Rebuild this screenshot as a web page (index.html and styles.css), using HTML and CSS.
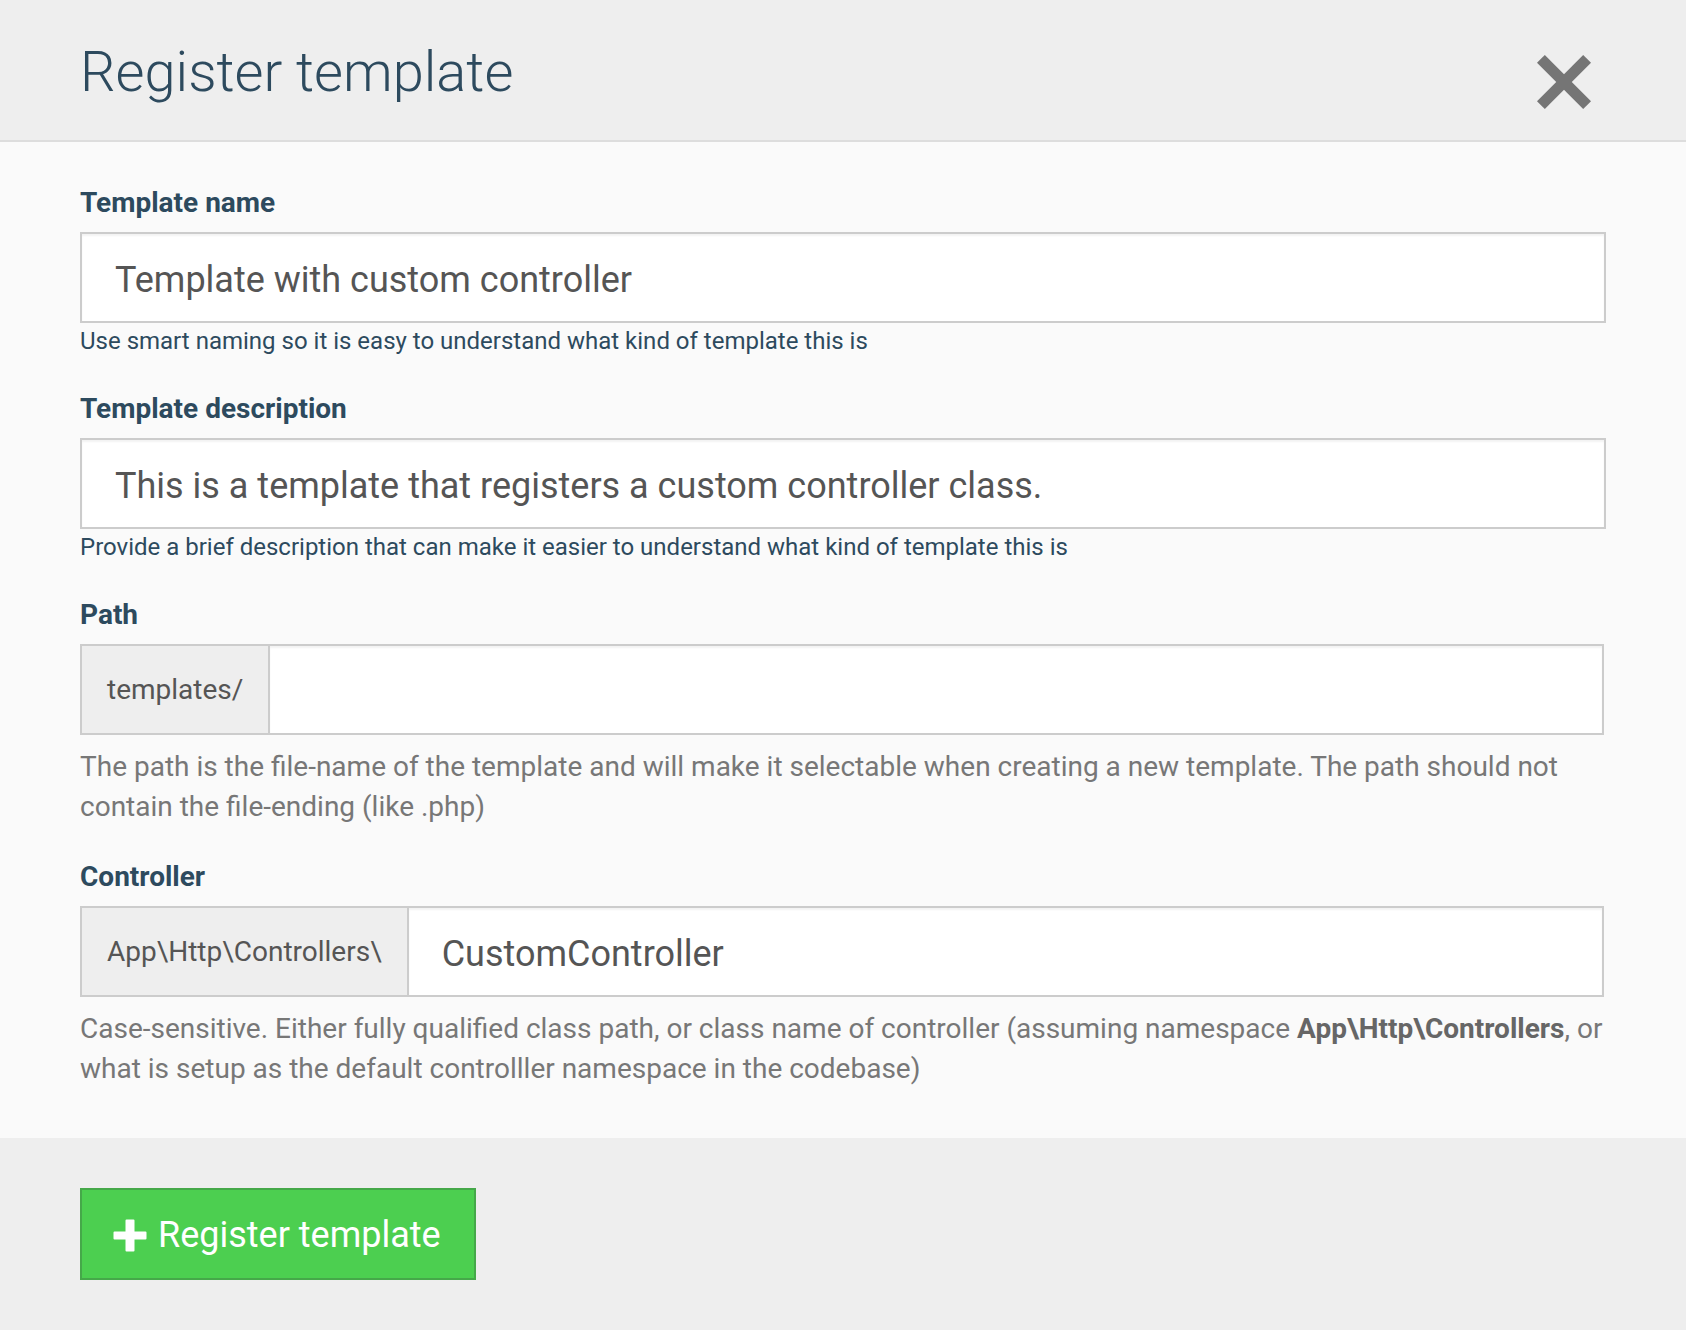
FILE: index.html
```html
<!DOCTYPE html>
<html lang="en">
<head>
<meta charset="utf-8">
<title>Register template</title>
<link rel="stylesheet" href="styles.css">
</head>
<body>
<div class="modal">
  <header class="modal-header">
    <h1 class="modal-title">Register template</h1>
    <button class="close" type="button" aria-label="Close">
      <svg width="54" height="54" viewBox="0 0 54 54" aria-hidden="true">
        <line x1="3.9" y1="3.9" x2="50.1" y2="50.1" stroke="#757575" stroke-width="11"/>
        <line x1="50.1" y1="3.9" x2="3.9" y2="50.1" stroke="#757575" stroke-width="11"/>
      </svg>
    </button>
  </header>
  <main class="modal-body">
    <div class="field">
      <label class="field-label">Template name</label>
      <div class="input">Template with custom controller</div>
      <p class="hint">Use smart naming so it is easy to understand what kind of template this is</p>
    </div>
    <div class="field">
      <label class="field-label">Template description</label>
      <div class="input">This is a template that registers a custom controller class.</div>
      <p class="hint">Provide a brief description that can make it easier to understand what kind of template this is</p>
    </div>
    <div class="field">
      <label class="field-label">Path</label>
      <div class="input-group">
        <span class="addon">templates/</span>
        <div class="input input-grow"></div>
      </div>
      <p class="help">The path is the file-name of the template and will make it selectable when creating a new template. The path should not contain the file-ending (like .php)</p>
    </div>
    <div class="field">
      <label class="field-label">Controller</label>
      <div class="input-group">
        <span class="addon">App\Http\Controllers\</span>
        <div class="input input-grow">CustomController</div>
      </div>
      <p class="help">Case-sensitive. Either fully qualified class path, or class name of controller (assuming namespace <strong>App\Http\Controllers</strong>, or what is setup as the default controlller namespace in the codebase)</p>
    </div>
  </main>
  <footer class="modal-footer">
    <button class="btn-success" type="button">
      <svg class="plus" width="34" height="34" viewBox="0 0 34 34" aria-hidden="true">
        <path d="M13.5 1.5h7a1 1 0 0 1 1 1v11h11a1 1 0 0 1 1 1v6a1 1 0 0 1-1 1h-11v11a1 1 0 0 1-1 1h-7a1 1 0 0 1-1-1v-11h-11a1 1 0 0 1-1-1v-6a1 1 0 0 1 1-1h11v-11a1 1 0 0 1 1-1z" fill="#ffffff"/>
      </svg>
      <span>Register template</span>
    </button>
  </footer>
</div>
</body>
</html>
```
FILE: styles.css
```css
* { box-sizing: border-box; }
html, body { margin: 0; padding: 0; }
body {
  font-family: Roboto, "Liberation Sans", Arial, sans-serif;
  background: #fafafa;
  width: 1686px;
  min-height: 1330px;
}
.modal {
  display: flex;
  flex-direction: column;
  min-height: 1330px;
}
.modal-header {
  height: 142px;
  background: #eeeeee;
  border-bottom: 2px solid #dddddd;
  padding: 0 95px 0 80px;
  display: flex;
  justify-content: space-between;
  align-items: flex-start;
}
.modal-title {
  margin: 39px 0 0 0;
  font-size: 56px;
  line-height: 66px;
  font-weight: 300;
  color: #2d4a5e;
}
.close {
  margin-top: 55px;
  padding: 0;
  border: 0;
  background: transparent;
  width: 54px;
  height: 54px;
  display: block;
}
.close svg { display: block; }
.modal-body {
  padding: 46px 80px 52px 80px;
  display: flex;
  flex-direction: column;
  gap: 38px;
  flex: 0 0 auto;
}
.field { display: flex; flex-direction: column; }
.field-label {
  font-size: 28px;
  line-height: 30px;
  font-weight: 700;
  color: #2d4a5e;
  margin-bottom: 14px;
}
.input {
  height: 91px;
  background: #ffffff;
  border: 2px solid #cccccc;
  box-shadow: inset 0 2px 2px rgba(0,0,0,0.05);
  padding: 5px 33px 0 33px;
  font-size: 36px;
  color: #555555;
  display: flex;
  align-items: center;
}
.input-group {
  display: flex;
  height: 91px;
  margin-right: 2px;
}
.addon {
  background: #eeeeee;
  border: 2px solid #cccccc;
  border-right: 0;
  padding: 0 25px;
  font-size: 28px;
  color: #555555;
  display: flex;
  align-items: center;
}
.input-grow { flex: 1 1 auto; height: 91px; }
.hint {
  margin: 3px 0 0 0;
  font-size: 24px;
  line-height: 30px;
  color: #2d4a5e;
}
.help {
  margin: 12px 0 -3px 0;
  font-size: 28px;
  line-height: 40px;
  color: #777777;
}
.help strong { color: #666666; font-weight: 700; }
.modal-footer {
  flex: 1 1 auto;
  background: #eeeeee;
  padding: 50px 80px;
}
.btn-success {
  height: 92px;
  width: 396px;
  background: #4ccf50;
  border: 2px solid #45a849;
  color: #ffffff;
  font-family: Roboto, "Liberation Sans", Arial, sans-serif;
  font-size: 36px;
  padding: 2px 0 0 31px;
  display: flex;
  align-items: center;
  gap: 11px;
}
.plus { display: block; flex: 0 0 auto; }
```
